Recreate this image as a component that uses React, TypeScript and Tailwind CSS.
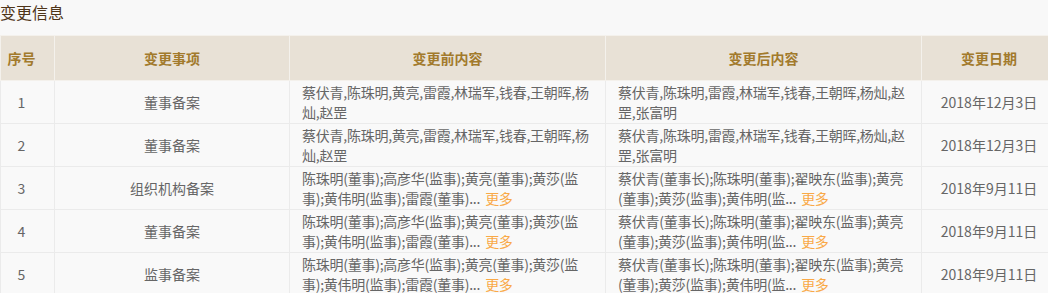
const beforeA = ["蔡伏青,陈珠明,黄亮,雷霞,林瑞军,钱春,王朝晖,杨", "灿,赵罡"];
const afterA = ["蔡伏青,陈珠明,雷霞,林瑞军,钱春,王朝晖,杨灿,赵", "罡,张富明"];
const beforeB = ["陈珠明(董事);高彦华(监事);黄亮(董事);黄莎(监", "事);黄伟明(监事);雷霞(董事)..."];
const afterB = ["蔡伏青(董事长);陈珠明(董事);翟映东(监事);黄亮", "(董事);黄莎(监事);黄伟明(监..."];

const rows = [
  { no: 1, item: "董事备案", before: beforeA, after: afterA, more: false, date: "2018年12月3日" },
  { no: 2, item: "董事备案", before: beforeA, after: afterA, more: false, date: "2018年12月3日" },
  { no: 3, item: "组织机构备案", before: beforeB, after: afterB, more: true, date: "2018年9月11日" },
  { no: 4, item: "董事备案", before: beforeB, after: afterB, more: true, date: "2018年9月11日" },
  { no: 5, item: "监事备案", before: beforeB, after: afterB, more: true, date: "2018年9月11日" },
];

const Content = ({ lines, more }: { lines: string[]; more: boolean }) => (
  <td className="border border-[#ebebeb] px-3 py-px text-left align-middle tracking-[-0.25px]">
    {lines.map((l, i) => (
      <span key={i} className="block whitespace-nowrap">
        {l}
        {more && i === lines.length - 1 && (
          <span className="ml-[5px] text-[#f9a948] cursor-pointer">更多</span>
        )}
      </span>
    ))}
  </td>
);

export default function App() {
  return (
    <div
      className="w-[1048px] h-[293px] overflow-hidden bg-[#f8f8f8] text-[14px] text-[#666]"
      style={{ fontFamily: '"Noto Sans CJK SC", "Noto Sans", sans-serif' }}
    >
      <h2 className="h-[35px] pt-[1px] text-[16px] leading-[22px] text-[#4e3418] font-normal">变更信息</h2>
      <table className="table-fixed border-collapse w-[1056px]">
        <colgroup>
          <col className="w-[54px]" />
          <col className="w-[235px]" />
          <col className="w-[316px]" />
          <col className="w-[316px]" />
          <col className="w-[135px]" />
        </colgroup>
        <thead>
          <tr className="h-[45px] bg-[#e8e1d6] text-[#a27a2c] font-bold">
            <th className="border border-[#f4f1ec] pr-3">序号</th>
            <th className="border border-[#f4f1ec]">变更事项</th>
            <th className="border border-[#f4f1ec]">变更前内容</th>
            <th className="border border-[#f4f1ec]">变更后内容</th>
            <th className="border border-[#f4f1ec]">变更日期</th>
          </tr>
        </thead>
        <tbody className="leading-[20px]">
          {rows.map((r) => (
            <tr key={r.no} className="h-[43px] bg-[#f9f9f9]">
              <td className="border border-[#ebebeb] pr-3 text-center">{r.no}</td>
              <td className="border border-[#ebebeb] text-center">{r.item}</td>
              <Content lines={r.before} more={r.more} />
              <Content lines={r.after} more={r.more} />
              <td className="border border-[#ebebeb] text-center">{r.date}</td>
            </tr>
          ))}
        </tbody>
      </table>
    </div>
  );
}
